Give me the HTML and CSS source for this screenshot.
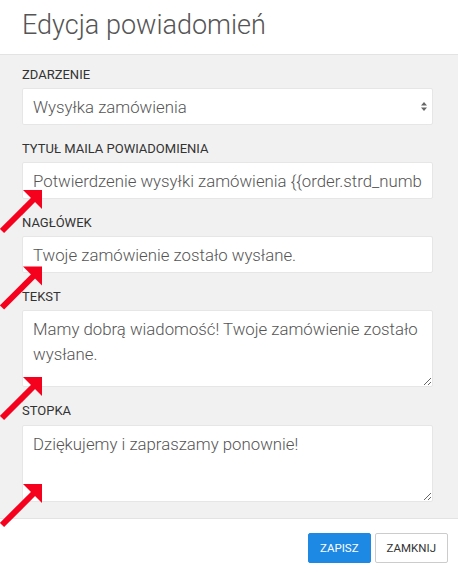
FILE: index.html
```html
<!DOCTYPE html>
<html lang="pl">
<head>
<meta charset="utf-8">
<title>Edycja powiadomień</title>
<link rel="stylesheet" href="styles.css">
</head>
<body>
<div class="modal">
  <div class="modal-header">
    <h1 class="modal-title">Edycja powiadomień</h1>
  </div>
  <div class="modal-body">
    <div class="form-group">
      <label class="form-label">Zdarzenie</label>
      <div class="select-wrap">
        <select class="form-control select">
          <option>Wysyłka zamówienia</option>
        </select>
        <svg class="select-icon" width="6" height="9" viewBox="0 0 6 9"><path d="M3 0 L6 3.5 H0 Z M0 5.5 H6 L3 9 Z" fill="#666"/></svg>
      </div>
    </div>
    <div class="form-group">
      <label class="form-label">Tytuł maila powiadomienia</label>
      <input class="form-control" type="text" value="Potwierdzenie wysyłki zamówienia {{order.strd_number}}">
    </div>
    <div class="form-group">
      <label class="form-label">Nagłówek</label>
      <input class="form-control" type="text" value="Twoje zamówienie zostało wysłane.">
    </div>
    <div class="form-group">
      <label class="form-label">Tekst</label>
      <textarea class="form-control textarea">Mamy dobrą wiadomość! Twoje zamówienie zostało wysłane.</textarea>
    </div>
    <div class="form-group">
      <label class="form-label label-loose">Stopka</label>
      <textarea class="form-control textarea">Dziękujemy i zapraszamy ponownie!</textarea>
    </div>
  </div>
  <div class="modal-footer">
    <button class="btn btn-primary">Zapisz</button>
    <button class="btn btn-default">Zamknij</button>
  </div>
</div>
<svg class="annotations" width="458" height="573" viewBox="0 0 458 573">
  <defs>
    <g id="arrow">
      <line x1="2" y1="231" x2="34" y2="199" stroke="#f5001d" stroke-width="6"/>
      <polygon points="42,190 23,190 42,209" fill="#f5001d"/>
    </g>
  </defs>
  <use href="#arrow"/>
  <use href="#arrow" transform="translate(0,76.5)"/>
  <use href="#arrow" transform="translate(0,187)"/>
  <use href="#arrow" transform="translate(0,294)"/>
</svg>
</body>
</html>
```
FILE: styles.css
```css
* { box-sizing: border-box; }
html, body { margin: 0; padding: 0; }
body {
  width: 458px;
  height: 573px;
  overflow: hidden;
  font-family: Roboto, "Liberation Sans", sans-serif;
  background: #fff;
  position: relative;
}
.modal { display: flex; flex-direction: column; height: 573px; }
.modal-header {
  height: 55px;
  padding: 0 22px;
  border-bottom: 1px solid #e3e3e3;
  background: #fff;
  display: flex;
  align-items: flex-start;
}
.modal-title {
  margin: 9px 0 0 0;
  font-size: 27px;
  line-height: 32px;
  font-weight: 300;
  color: #555;
}
.modal-body {
  background: #f1f1f1;
  padding: 11px 25px 1px 22px;
  border-bottom: 1px solid #e3e3e3;
}
.form-group { margin-bottom: 15px; }
.form-label {
  display: block;
  font-size: 13px;
  line-height: 17px;
  color: #333;
  text-transform: uppercase;
  margin-bottom: 5px;
}
.label-loose { margin-bottom: 6px; }
.form-control {
  display: block;
  width: 100%;
  height: 37px;
  padding: 0 10px;
  border: 1px solid #e6e6e6;
  border-radius: 2px;
  background: #fff;
  font-family: Roboto, "Liberation Sans", sans-serif;
  font-size: 16.8px;
  font-weight: 300;
  color: #555;
  outline: none;
  margin: 0;
}
.select-wrap { position: relative; }
.select {
  appearance: none;
  -webkit-appearance: none;
}
.select-icon {
  position: absolute;
  right: 6px;
  top: 14px;
}
.textarea {
  height: 77px;
  padding: 6px 6px 6px 10px;
  line-height: 25px;
  resize: vertical;
  margin-bottom: 1px;
}
.modal-footer {
  flex: 1;
  display: flex;
  justify-content: flex-end;
  align-items: flex-start;
  gap: 4px;
  padding: 14px 10px 0 0;
  background: #fff;
}
.btn {
  height: 30px;
  padding: 0 11px;
  border-radius: 2px;
  font-family: Roboto, "Liberation Sans", sans-serif;
  font-size: 11.5px;
  text-transform: uppercase;
  cursor: pointer;
}
.btn-primary {
  background: #1e88e5;
  border: 1px solid #1e88e5;
  color: #fff;
}
.btn-default {
  background: #fff;
  border: 1px solid #ccc;
  color: #333;
}
.annotations {
  position: absolute;
  left: 0;
  top: 0;
  pointer-events: none;
}
```
